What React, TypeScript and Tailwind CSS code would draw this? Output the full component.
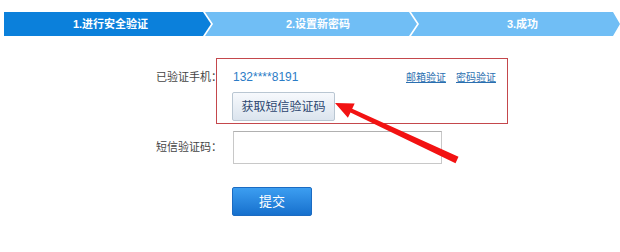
import React from 'react'

const steps = [
  { label: '1.进行安全验证', active: true },
  { label: '2.设置新密码', active: false },
  { label: '3.成功', active: false },
]

const cjk = "font-['Liberation_Sans','Noto_Sans_CJK_SC',sans-serif]"

function StepBar() {
  return (
    <div className="flex h-[24px] pl-[4px]">
      <div className="flex h-full w-[207px] items-center justify-center bg-[#0b80db] pl-[6px] text-[11px] font-bold text-white [clip-path:polygon(0_0,199px_0,100%_50%,199px_100%,0_100%)]">
        {steps[0].label}
      </div>
      <div className="ml-[-6px] flex h-full w-[212px] items-center justify-center bg-[#70bef5] pl-[14px] text-[11px] font-bold text-white [clip-path:polygon(0_0,204px_0,100%_50%,204px_100%,0_100%,8px_50%)]">
        {steps[1].label}
      </div>
      <div className="ml-[-6px] flex h-full w-[209px] items-center justify-center bg-[#70bef5] pl-[14px] text-[11px] font-bold text-white [clip-path:polygon(0_0,202px_0,100%_50%,202px_100%,0_100%,8px_50%)]">
        {steps[2].label}
      </div>
    </div>
  )
}

export default function App() {
  return (
    <div className={`relative h-[252px] w-[620px] overflow-hidden bg-white ${cjk}`}>
      <div className="pt-[12px]">
        <StepBar />
      </div>

      {/* form */}
      <div className="mt-[32px] grid grid-cols-[222px_1fr] gap-x-[10px] text-[12px] text-[#444]">
        <div className="flex h-[18px] items-center justify-end text-[11px]">已验证手机：</div>
        <div className="flex h-[18px] items-center">
          <span className="ml-[1px] w-[173px] text-[#2b7cc6]">132****8191</span>
          <a className="text-[10px] text-[#2b6fb0] underline">邮箱验证</a>
          <a className="ml-[10px] text-[10px] text-[#2b6fb0] underline">密码验证</a>
        </div>

        <div />
        <div className="mt-[6px]">
          <button className="h-[29px] w-[103px] rounded-[2px] border border-[#b9c6d2] bg-gradient-to-b from-[#f7f9fc] to-[#dbe4ee] text-[12px] text-[#2c4670]">
            获取短信验证码
          </button>
        </div>

        <div className="mt-[10px] flex h-[33px] items-center justify-end text-[11px]">短信验证码：</div>
        <div className="mt-[10px]">
          <div className="ml-[1px] h-[33px] w-[209px] border border-[#c8c8c8] border-t-[#b0b0b0] bg-white" />
        </div>

        <div />
        <div className="mt-[23px]">
          <button className="h-[29px] w-[80px] rounded-[2px] border border-[#1b6bc2] bg-gradient-to-b from-[#3c9ef1] to-[#1670cd] text-[13px] text-white">
            提交
          </button>
        </div>
      </div>

      {/* annotation overlay */}
      <div className="pointer-events-none absolute left-[216px] top-[58px] h-[66px] w-[292px] border border-[#c4474c]" />
      <svg className="pointer-events-none absolute inset-0" width="620" height="252" viewBox="0 0 620 252">
        <polygon
          points="335,103 354.7,103.4 352.2,108.8 458.5,156.8 455.5,163.2 350.5,112.4 347.9,117.8"
          fill="#f21212"
        />
      </svg>
    </div>
  )
}
